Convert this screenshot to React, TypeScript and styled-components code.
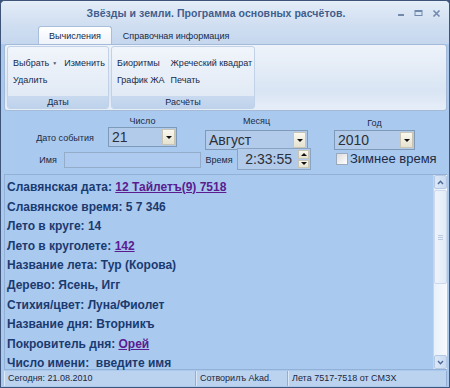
import React from 'react'
import styled, { createGlobalStyle } from 'styled-components'

const GlobalStyle = createGlobalStyle`
  html, body {
    margin: 0;
    padding: 0;
    background: #3d5478;
  }
  body {
    font-family: "Liberation Sans", Arial, sans-serif;
  }
`

const colors = {
  body: '#a9c9ef',
  text: '#1b3a70',
  link: '#5b1c8f',
  frame: '#3d5478',
}

const Window = styled.div`
  width: 450px;
  height: 388px;
  box-sizing: border-box;
  display: flex;
  flex-direction: column;
  background: ${colors.body};
  border: 1px solid ${colors.frame};
  border-top-left-radius: 5px;
  border-top-right-radius: 5px;
  overflow: hidden;
`

const TitleBar = styled.div`
  height: 24px;
  flex: none;
  display: flex;
  align-items: center;
  background: linear-gradient(#e4edf8, #d0def1);
`

const Title = styled.div`
  flex: 1;
  text-align: center;
  padding-left: 34px;
  font-size: 10.5px;
  font-weight: bold;
  letter-spacing: 0.05px;
  color: #3f5d8d;
`

const Controls = styled.div`
  display: flex;
  gap: 9px;
  padding-right: 8px;
  align-items: center;
`

const Tabs = styled.div`
  height: 19px;
  flex: none;
  display: flex;
  align-items: flex-end;
  padding-left: 37px;
  gap: 8px;
  background: linear-gradient(#d0def1, #c5d7ee);
`

const Tab = styled.div<{ $active?: boolean }>`
  height: 18px;
  box-sizing: border-box;
  padding: 0 ${(p) => (p.$active ? '10px' : '2px')};
  display: flex;
  align-items: center;
  font-size: 9px;
  color: #15294a;
  border: 1px solid ${(p) => (p.$active ? '#a9bedb' : 'transparent')};
  border-bottom: none;
  border-radius: 3px 3px 0 0;
  background: ${(p) => (p.$active ? 'linear-gradient(#ffffff, #eef3fa)' : 'transparent')};
`

const Ribbon = styled.div`
  height: 67px;
  flex: none;
  margin: 0 2px 0 3px;
  box-sizing: border-box;
  display: flex;
  gap: 2px;
  padding: 1px 2px;
  border: 1px solid #a3bad9;
  border-radius: 3px;
  background: linear-gradient(#eef3fa, #d9e5f4 70%, #e6eef8);
`

const Group = styled.div<{ $w: number }>`
  width: ${(p) => p.$w}px;
  display: flex;
  flex-direction: column;
  border: 1px solid #c1d2e8;
  border-radius: 3px;
  background: linear-gradient(#f1f5fb, #dde7f4);
  overflow: hidden;
`

const GroupBody = styled.div<{ $gap: number }>`
  flex: 1;
  display: grid;
  grid-template-columns: auto auto;
  grid-auto-rows: 17px;
  justify-content: start;
  column-gap: ${(p) => p.$gap}px;
  padding: 7px 0 0 5px;
`

const RibbonButton = styled.div`
  font-size: 9px;
  color: #15294a;
  white-space: nowrap;
  display: flex;
  align-items: center;
`

const Caret = styled.span`
  font-size: 5px;
  margin-left: 3px;
  color: #4b5b73;
`

const GroupLabel = styled.div`
  height: 12px;
  line-height: 12px;
  text-align: center;
  font-size: 9px;
  color: #15294a;
  background: linear-gradient(#c9daef, #bed2ec);
`

const Form = styled.div`
  height: 63px;
  flex: none;
  display: flex;
  flex-direction: column;
`

const Row = styled.div<{ $top: number; $left: number }>`
  display: flex;
  align-items: flex-start;
  margin-top: ${(p) => p.$top}px;
  padding-left: ${(p) => p.$left}px;
`

const Field = styled.div<{ $w: number; $mr: number; $top?: number }>`
  width: ${(p) => p.$w}px;
  margin-right: ${(p) => p.$mr}px;
  margin-top: ${(p) => p.$top || 0}px;
  display: flex;
  flex-direction: column;
  align-items: stretch;
`

const SmallLabel = styled.div<{ $w?: number; $mr?: number; $h?: number; $top?: number }>`
  font-size: 9px;
  color: #1b2a44;
  white-space: nowrap;
  text-align: center;
  height: ${(p) => p.$h || 11}px;
  line-height: ${(p) => p.$h || 11}px;
  margin-top: ${(p) => p.$top || 0}px;
  ${(p) => (p.$w ? `width: ${p.$w}px;` : '')}
  ${(p) => (p.$mr ? `margin-right: ${p.$mr}px;` : '')}
`

const Combo = styled.div<{ $top?: number }>`
  height: 20px;
  margin-top: ${(p) => p.$top || 0}px;
  box-sizing: border-box;
  display: flex;
  align-items: stretch;
  border: 1px solid #7f9ab9;
  background: #b3cbea;
`

const ComboText = styled.div`
  flex: 1;
  padding-left: 3px;
  font-size: 14px;
  line-height: 18px;
  color: #2a2f38;
`

const ComboButton = styled.div`
  width: 13px;
  margin: 1px;
  display: flex;
  align-items: center;
  justify-content: center;
  background: linear-gradient(#faf8ef, #e6e2d0);
  border: 1px solid #c9c5b4;
  box-sizing: border-box;
`

const Arrow = styled.div<{ $up?: boolean }>`
  width: 0;
  height: 0;
  border-left: 3px solid transparent;
  border-right: 3px solid transparent;
  ${(p) => (p.$up ? 'border-bottom: 3px solid #111;' : 'border-top: 3px solid #111;')}
`

const TextInput = styled.div<{ $w: number }>`
  width: ${(p) => p.$w}px;
  height: 16px;
  margin-top: 5px;
  box-sizing: border-box;
  border: 1px solid #93acca;
  background: #aecaee;
`

const Spin = styled.div`
  width: 74px;
  height: 22px;
  margin-top: 1px;
  box-sizing: border-box;
  display: flex;
  border: 1px solid #8aa3c2;
  background: #b3cbea;
`

const SpinText = styled.div`
  flex: 1;
  text-align: right;
  padding-right: 6px;
  font-size: 14px;
  line-height: 20px;
  color: #2a2f38;
`

const SpinButtons = styled.div`
  width: 11px;
  display: flex;
  flex-direction: column;
  gap: 1px;
  padding: 1px 1px 1px 0;
`

const SpinButton = styled(ComboButton)`
  flex: 1;
  width: auto;
  margin: 0;
`

const Check = styled.label`
  display: flex;
  align-items: center;
  gap: 2px;
  margin: 4px 0 0 25px;
  font-size: 13px;
  color: #1d2c46;
`

const CheckBox = styled.span`
  width: 10px;
  height: 10px;
  background: linear-gradient(135deg, #dcdcdc, #ffffff);
  border: 1px solid #9aa9bd;
`

const Panel = styled.div`
  flex: 1;
  min-height: 0;
  margin: 0 2px 0 3px;
  display: flex;
  border: 1px solid #93b1d7;
  border-right: none;
`

const Lines = styled.div`
  flex: 1;
  padding: 3px 0 0 2px;
`

const Line = styled.div`
  height: 19.6px;
  line-height: 19.6px;
  font-size: 12px;
  font-weight: bold;
  color: ${colors.text};
  white-space: pre;
`

const Link = styled.span`
  color: ${colors.link};
  text-decoration: underline;
`

const ScrollBar = styled.div`
  width: 13px;
  display: flex;
  flex-direction: column;
  background: linear-gradient(90deg, #e9f0fa, #f7faff);
  border-left: 1px solid #c4d4ea;
`

const ScrollArrow = styled.div`
  height: 12px;
  display: flex;
  align-items: center;
  justify-content: center;
  background: linear-gradient(90deg, #dce8f7, #c8daf2);
  border: 1px solid #b4c9e6;
  border-radius: 2px;
`

const Thumb = styled.div`
  height: 92px;
  margin: 1px 0;
  display: flex;
  align-items: center;
  justify-content: center;
  background: linear-gradient(90deg, #eef4fc, #e1ebf8);
  border: 1px solid #cbd9ec;
  border-radius: 2px;
`

const Grip = styled.div`
  width: 5px;
  height: 5px;
  background: repeating-linear-gradient(#b8c9e0 0 1px, transparent 1px 2px);
`

const Track = styled.div`
  flex: 1;
`

const StatusBar = styled.div`
  height: 15px;
  flex: none;
  margin: 1px 2px 1px 3px;
  display: flex;
  background: #bcd3ef;
`

const StatusCell = styled.div<{ $w?: number }>`
  ${(p) => (p.$w ? `width: ${p.$w}px;` : 'flex: 1;')}
  box-sizing: border-box;
  padding-left: 3px;
  font-size: 9px;
  line-height: 14px;
  color: #1a2640;
  border-right: 1px solid #93aed3;
  border-left: 1px solid #dce8f7;
`

const Chevron = ({ up }: { up?: boolean }) => (
  <svg width="7" height="5" viewBox="0 0 7 5">
    <path
      d={up ? 'M1 4 L3.5 1.3 L6 4' : 'M1 1 L3.5 3.7 L6 1'}
      fill="none"
      stroke="#4d6a96"
      strokeWidth="1.4"
    />
  </svg>
)

const lines: { label: string; value: string; link?: boolean }[] = [
  { label: 'Славянская дата: ', value: '12 Тайлетъ(9) 7518', link: true },
  { label: 'Славянское время: ', value: '5 7 346' },
  { label: 'Лето в круге: ', value: '14' },
  { label: 'Лето в круголете: ', value: '142', link: true },
  { label: 'Название лета: ', value: 'Тур (Корова)' },
  { label: 'Дерево: ', value: 'Ясень, Игг' },
  { label: 'Стихия/цвет: ', value: 'Луна/Фиолет' },
  { label: 'Название дня: ', value: 'Вторникъ' },
  { label: 'Покровитель дня: ', value: 'Орей', link: true },
  { label: 'Число имени:  ', value: 'введите имя' },
]

const App = () => {
  return (
    <>
      <GlobalStyle />
      <Window>
        <TitleBar>
          <Title>Звёзды и земли. Программа основных расчётов.</Title>
          <Controls>
            <svg width="8" height="8" viewBox="0 0 8 8">
              <rect x="1" y="5" width="6" height="2" fill="#7089ad" />
            </svg>
            <svg width="9" height="8" viewBox="0 0 9 8">
              <rect x="1" y="1.5" width="7" height="5" fill="none" stroke="#7089ad" strokeWidth="1" />
              <rect x="1" y="1" width="7" height="2" fill="#7089ad" />
            </svg>
            <svg width="9" height="9" viewBox="0 0 9 9">
              <path d="M1.5 1.5 L7.5 7.5 M7.5 1.5 L1.5 7.5" stroke="#7089ad" strokeWidth="1.6" />
            </svg>
          </Controls>
        </TitleBar>

        <Tabs>
          <Tab $active>Вычисления</Tab>
          <Tab>Справочная информация</Tab>
        </Tabs>

        <Ribbon>
          <Group $w={100}>
            <GroupBody $gap={7}>
              <RibbonButton>
                Выбрать<Caret>▼</Caret>
              </RibbonButton>
              <RibbonButton>Изменить</RibbonButton>
              <RibbonButton>Удалить</RibbonButton>
            </GroupBody>
            <GroupLabel>Даты</GroupLabel>
          </Group>
          <Group $w={142}>
            <GroupBody $gap={6}>
              <RibbonButton>Биоритмы</RibbonButton>
              <RibbonButton>Жреческий квадрат</RibbonButton>
              <RibbonButton>График ЖА</RibbonButton>
              <RibbonButton>Печать</RibbonButton>
            </GroupBody>
            <GroupLabel>Расчёты</GroupLabel>
          </Group>
        </Ribbon>

        <Form>
          <Row $top={5} $left={33}>
            <SmallLabel $w={62} $mr={12} $h={20} $top={12}>
              Дато события
            </SmallLabel>
            <Field $w={69} $mr={28}>
              <SmallLabel>Число</SmallLabel>
              <Combo>
                <ComboText>21</ComboText>
                <ComboButton>
                  <Arrow />
                </ComboButton>
              </Combo>
            </Field>
            <Field $w={103} $mr={26}>
              <SmallLabel>Месяц</SmallLabel>
              <Combo $top={3}>
                <ComboText>Август</ComboText>
                <ComboButton>
                  <Arrow />
                </ComboButton>
              </Combo>
            </Field>
            <Field $w={81} $mr={0} $top={2}>
              <SmallLabel>Год</SmallLabel>
              <Combo $top={1}>
                <ComboText>2010</ComboText>
                <ComboButton>
                  <Arrow />
                </ComboButton>
              </Combo>
            </Field>
          </Row>
          <Row $top={-3} $left={33}>
            <SmallLabel $w={28} $mr={2} $h={16} $top={5}>
              Имя
            </SmallLabel>
            <TextInput $w={137} />
            <SmallLabel $w={36} $h={22} $top={2}>
              Время
            </SmallLabel>
            <Spin>
              <SpinText>2:33:55</SpinText>
              <SpinButtons>
                <SpinButton>
                  <Arrow $up />
                </SpinButton>
                <SpinButton>
                  <Arrow />
                </SpinButton>
              </SpinButtons>
            </Spin>
            <Check>
              <CheckBox />
              Зимнее время
            </Check>
          </Row>
        </Form>

        <Panel>
          <Lines>
            {lines.map((l) => (
              <Line key={l.label}>
                {l.label}
                {l.link ? <Link>{l.value}</Link> : l.value}
              </Line>
            ))}
          </Lines>
          <ScrollBar>
            <ScrollArrow>
              <Chevron up />
            </ScrollArrow>
            <Thumb>
              <Grip />
            </Thumb>
            <Track />
            <ScrollArrow>
              <Chevron />
            </ScrollArrow>
          </ScrollBar>
        </Panel>

        <StatusBar>
          <StatusCell $w={192}>Сегодня: 21.08.2010</StatusCell>
          <StatusCell $w={92}>Сотворилъ Akad.</StatusCell>
          <StatusCell>Лета 7517-7518 от СМЗХ</StatusCell>
        </StatusBar>
      </Window>
    </>
  )
}

export default App
